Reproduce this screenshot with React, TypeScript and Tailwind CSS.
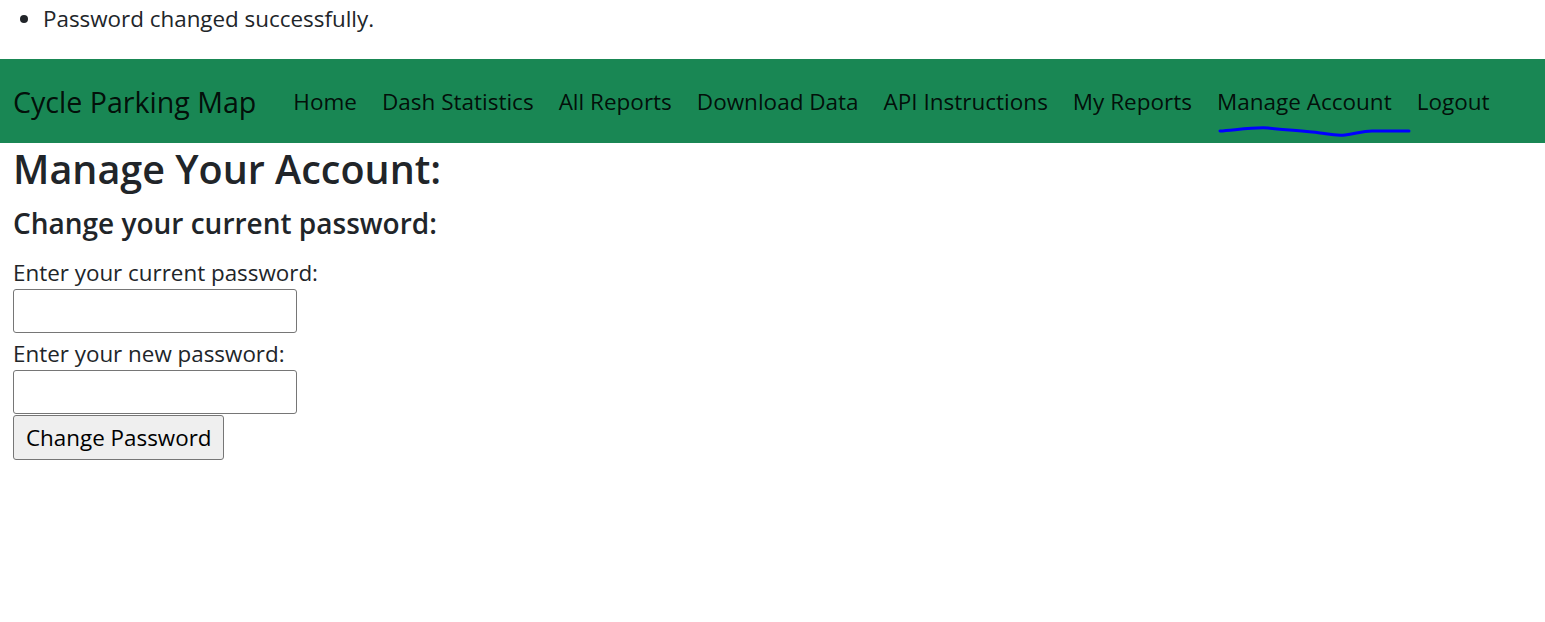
import React from "react";

const links = [
  "Home",
  "Dash Statistics",
  "All Reports",
  "Download Data",
  "API Instructions",
  "My Reports",
  "Manage Account",
  "Logout",
];

export default function App() {
  return (
    <div className="min-h-[622px] bg-white text-[#212529] font-['Open_Sans',sans-serif] text-[22.4px] leading-[32px]">
      <ul className="list-disc pl-[43px] pt-[3px] pb-[24px] m-0">
        <li>Password changed successfully.</li>
      </ul>
      <nav className="relative h-[84px] bg-[#198754] flex items-center pl-[13px] pt-[2px]">
        <span className="text-[28.6px] text-black/90 mr-[37px]">Cycle Parking Map</span>
        <div className="flex items-center gap-[25px]">
          {links.map((l) => (
            <a key={l} className="text-[22.5px] text-black/90 whitespace-nowrap">
              {l}
            </a>
          ))}
        </div>
        <svg
          className="absolute left-[1214px] top-[64px]"
          width="200"
          height="16"
          viewBox="1214 123 200 16"
        >
          <path
            d="M1220 131 C1235 130 1255 127 1268 128 C1285 130 1305 131 1320 133 C1328 134 1336 136 1345 135 C1355 134 1362 131 1372 131 L1409 131"
            fill="none"
            stroke="#0000ff"
            strokeWidth="3"
            strokeLinecap="round"
          />
        </svg>
      </nav>
      <div className="pl-[13px]">
        <h1 className="text-[39.5px] leading-[52px] font-semibold m-0">Manage Your Account:</h1>
        <h3 className="text-[28px] leading-[42px] font-semibold mt-[7px] mb-[13px]">
          Change your current password:
        </h3>
        <form className="flex flex-col items-start">
          <label className="leading-[32px]">Enter your current password:</label>
          <input
            type="password"
            className="w-[284px] h-[44px] border border-[#767676] rounded-[3px] bg-white"
          />
          <label className="leading-[32px] mt-[5px]">Enter your new password:</label>
          <input
            type="password"
            className="w-[284px] h-[44px] border border-[#767676] rounded-[3px] bg-white"
          />
          <button
            type="button"
            className="mt-[1px] h-[45px] px-[12px] border border-[#767676] rounded-[3px] bg-[#efefef] text-black text-[22.4px]"
          >
            Change Password
          </button>
        </form>
      </div>
    </div>
  );
}
